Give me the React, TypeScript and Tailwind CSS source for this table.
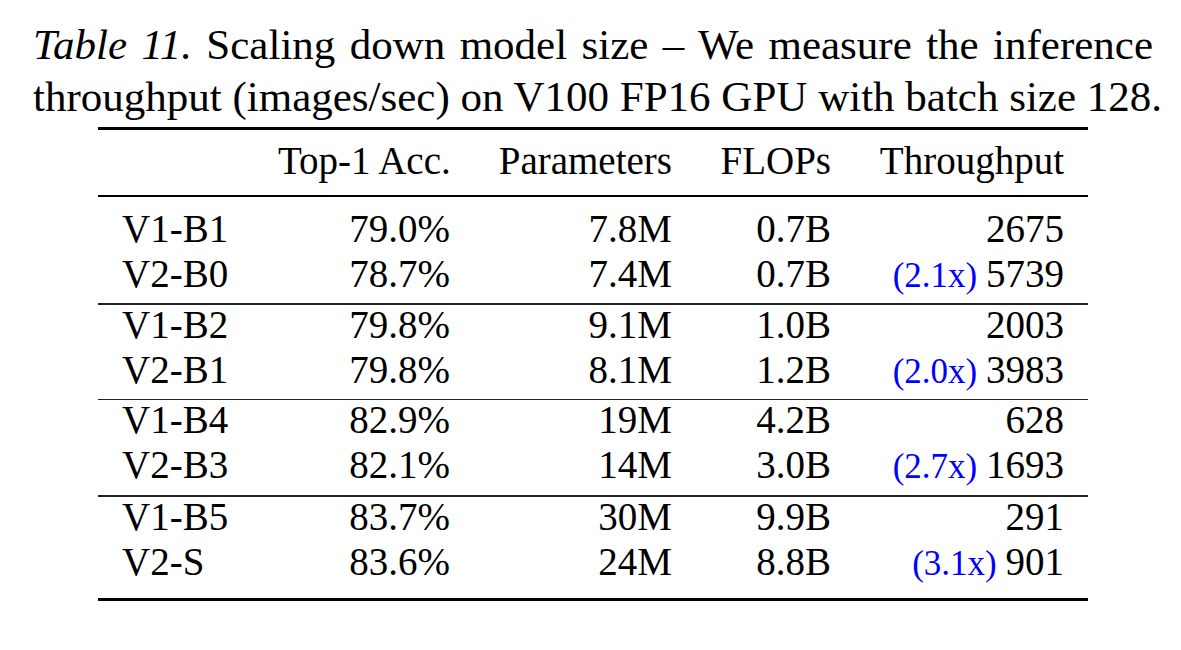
const rows: { name: string; acc: string; params: string; flops: string; speed: string; gain?: string }[][] = [
  [
    { name: "V1-B1", acc: "79.0%", params: "7.8M", flops: "0.7B", speed: "2675" },
    { name: "V2-B0", acc: "78.7%", params: "7.4M", flops: "0.7B", speed: "5739", gain: "(2.1x)" },
  ],
  [
    { name: "V1-B2", acc: "79.8%", params: "9.1M", flops: "1.0B", speed: "2003" },
    { name: "V2-B1", acc: "79.8%", params: "8.1M", flops: "1.2B", speed: "3983", gain: "(2.0x)" },
  ],
  [
    { name: "V1-B4", acc: "82.9%", params: "19M", flops: "4.2B", speed: "628" },
    { name: "V2-B3", acc: "82.1%", params: "14M", flops: "3.0B", speed: "1693", gain: "(2.7x)" },
  ],
  [
    { name: "V1-B5", acc: "83.7%", params: "30M", flops: "9.9B", speed: "291" },
    { name: "V2-S", acc: "83.6%", params: "24M", flops: "8.8B", speed: "901", gain: "(3.1x)" },
  ],
];

const cols = "grid grid-cols-[156px_220px_222px_159px_233px]";

const groupPad = ["pt-[12px] pb-[4px]", "pb-[4px]", "pb-[5px]", "pb-[11px]"];

export default function App() {
  return (
    <div className="w-[1181px] h-[650px] bg-white text-black font-['Liberation_Serif','Times_New_Roman',serif]">
      {/* Caption */}
      <div className="pt-[19px] pl-[33px] text-[43px] leading-[52px]">
        <p className="w-[1120px] text-justify [text-align-last:justify]">
          <i>Table 11.</i> Scaling down model size – We measure the inference
        </p>
        <p className="whitespace-nowrap">throughput (images/sec) on V100 FP16 GPU with batch size 128.</p>
      </div>

      {/* Table */}
      <div className="ml-[98px] mt-[4px] w-[990px] text-[39px] leading-[40px]">
        <div className="h-[3px] bg-black" />
        <div className={`${cols} pt-[11px] pb-[14px]`}>
          <div className="px-[24px]" />
          <div className="px-[24px] text-right whitespace-nowrap">Top-1 Acc.</div>
          <div className="px-[24px] text-right">Parameters</div>
          <div className="px-[24px] text-right">FLOPs</div>
          <div className="px-[24px] text-right">Throughput</div>
        </div>
        <div className="h-[2px] bg-black" />

        {rows.map((group, gi) => (
          <div key={gi}>
            <div className={groupPad[gi]}>
              {group.map((r) => (
                <div key={r.name} className={`${cols} h-[45px]`}>
                  <div className="px-[24px]">{r.name}</div>
                  <div className="px-[24px] text-right">{r.acc}</div>
                  <div className="px-[24px] text-right">{r.params}</div>
                  <div className="px-[24px] text-right">{r.flops}</div>
                  <div className="px-[24px] text-right whitespace-nowrap">
                    {r.gain && <span className="text-[35px] text-[#0000ff]">{r.gain} </span>}
                    {r.speed}
                  </div>
                </div>
              ))}
            </div>
            {gi < rows.length - 1 ? (
              <div className="h-[1.5px] bg-[#222]" />
            ) : (
              <div className="h-[3px] bg-black" />
            )}
          </div>
        ))}
      </div>
    </div>
  );
}
